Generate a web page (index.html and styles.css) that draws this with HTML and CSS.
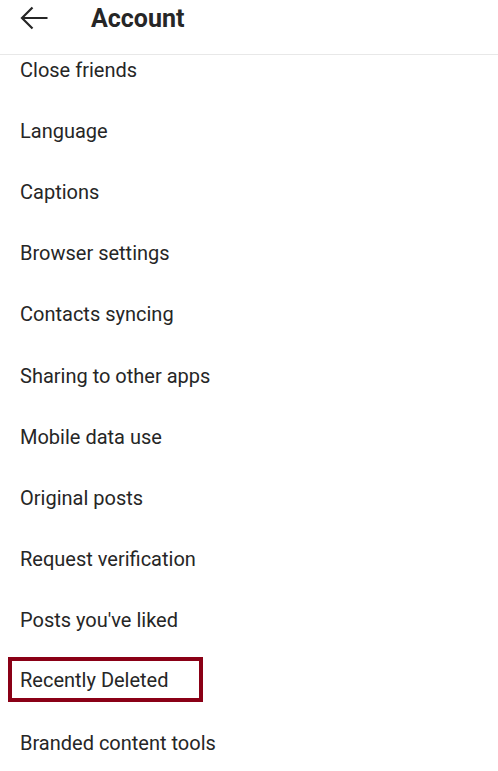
FILE: index.html
```html
<!DOCTYPE html>
<html lang="en">
<head>
  <meta charset="UTF-8">
  <title>Account</title>
  <link rel="stylesheet" href="styles.css">
</head>
<body>
  <div class="header">
    <svg class="back" width="28" height="24" viewBox="0 0 28 24">
      <path d="M27.5 12 H2 M12.5 1.5 L2 12 L12.5 22.5" fill="none" stroke="#262626" stroke-width="2.2"/>
    </svg>
    <h1>Account</h1>
  </div>

  <div class="scroll">
    <ul class="menu">
      <li>Close friends</li>
      <li>Language</li>
      <li>Captions</li>
      <li>Browser settings</li>
      <li>Contacts syncing</li>
      <li>Sharing to other apps</li>
      <li>Mobile data use</li>
      <li>Original posts</li>
      <li>Request verification</li>
      <li>Posts you've liked</li>
      <li><span class="marked">Recently Deleted</span></li>
      <li>Branded content tools</li>
    </ul>
  </div>
</body>
</html>
```

FILE: styles.css
```css
html, body {
  margin: 0;
  height: 771px;
  overflow: hidden;
  background-color: #fff;
}
body {
  font-family: Roboto, "Noto Sans", sans-serif;
  color: #262626;
}
.header {
  display: flex;
  align-items: center;
  height: 55px;
  box-sizing: border-box;
  padding: 0 0 18px 20px;
  border-bottom: 1px solid #e8e8e8;
}
.back {
  flex: none;
}
h1 {
  margin: 0 0 0 43px;
  font-size: 25px;
  font-weight: 700;
  color: #262626;
}
.scroll {
  overflow: hidden;
}
.menu {
  list-style: none;
  margin: -16px 0 0 0;
  padding: 0;
}
.menu li {
  display: flex;
  align-items: center;
  height: 61.2px;
  padding-left: 20px;
  font-size: 20px;
}
.marked {
  display: flex;
  align-items: center;
  height: 37px;
  margin: 0 0 3px -12px;
  padding: 0 30px 0 8px;
  border: 4px solid #8a0016;
}
```
